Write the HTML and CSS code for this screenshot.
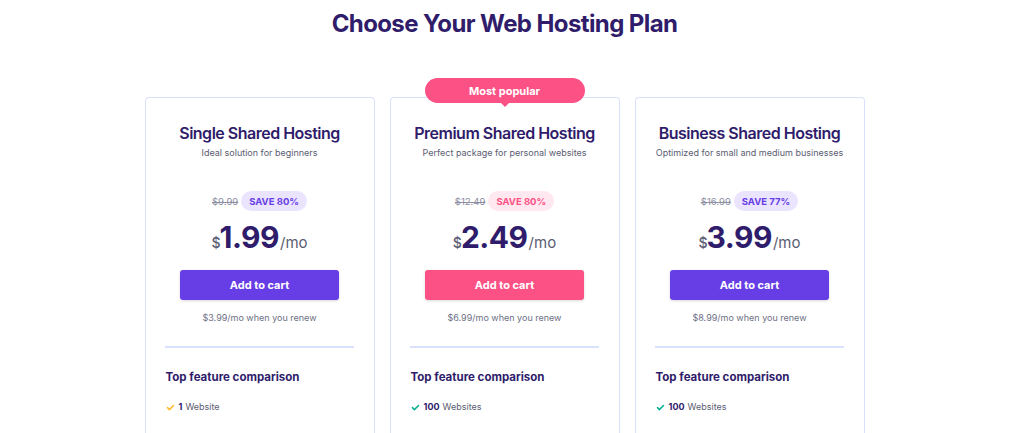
FILE: index.html
```html
<!DOCTYPE html>
<html lang="en">
<head>
<meta charset="utf-8">
<title>Choose Your Web Hosting Plan</title>
<link rel="stylesheet" href="styles.css">
</head>
<body>
<main class="page">
  <h1 class="title">Choose Your Web Hosting Plan</h1>
  <div class="plans">
    <section class="card">
      <h2 class="card-title">Single Shared Hosting</h2>
      <p class="card-sub">Ideal solution for beginners</p>
      <div class="save-row">
        <span class="old">$9.99</span>
        <span class="save">SAVE 80%</span>
      </div>
      <div class="price"><span class="cur">$</span><span class="amt">1.99</span><span class="per">/mo</span></div>
      <button class="cart">Add to cart</button>
      <p class="renew">$3.99/mo when you renew</p>
      <hr class="divider">
      <h3 class="feat-title">Top feature comparison</h3>
      <ul class="feats">
        <li><svg class="check yellow" viewBox="0 0 12 12"><path d="M2 6.2l2.6 2.6L10 3.4"/></svg><b>1</b> Website</li>
      </ul>
    </section>
    <section class="card popular">
      <div class="badge">Most popular</div>
      <h2 class="card-title">Premium Shared Hosting</h2>
      <p class="card-sub">Perfect package for personal websites</p>
      <div class="save-row">
        <span class="old">$12.49</span>
        <span class="save pink">SAVE 80%</span>
      </div>
      <div class="price"><span class="cur">$</span><span class="amt">2.49</span><span class="per">/mo</span></div>
      <button class="cart pink">Add to cart</button>
      <p class="renew">$6.99/mo when you renew</p>
      <hr class="divider">
      <h3 class="feat-title">Top feature comparison</h3>
      <ul class="feats">
        <li><svg class="check green" viewBox="0 0 12 12"><path d="M2 6.2l2.6 2.6L10 3.4"/></svg><b>100</b> Websites</li>
      </ul>
    </section>
    <section class="card">
      <h2 class="card-title">Business Shared Hosting</h2>
      <p class="card-sub">Optimized for small and medium businesses</p>
      <div class="save-row">
        <span class="old">$16.99</span>
        <span class="save">SAVE 77%</span>
      </div>
      <div class="price"><span class="cur">$</span><span class="amt">3.99</span><span class="per">/mo</span></div>
      <button class="cart">Add to cart</button>
      <p class="renew">$8.99/mo when you renew</p>
      <hr class="divider">
      <h3 class="feat-title">Top feature comparison</h3>
      <ul class="feats">
        <li><svg class="check green" viewBox="0 0 12 12"><path d="M2 6.2l2.6 2.6L10 3.4"/></svg><b>100</b> Websites</li>
      </ul>
    </section>
  </div>
</main>
</body>
</html>
```
FILE: styles.css
```css
* { box-sizing: border-box; }
html, body { margin: 0; padding: 0; background: #fff; }
body {
  font-family: "Inter", "DejaVu Sans", sans-serif;
  color: #2f1c6a;
  overflow: hidden;
  height: 433px;
}
.page {
  width: 1009px;
  display: flex;
  flex-direction: column;
  align-items: center;
}
.title {
  margin: 9px 0 0;
  font-size: 24px;
  font-weight: 700;
  letter-spacing: -0.6px;
  line-height: 30px;
  color: #2f1c6a;
}
.plans {
  margin-top: 58px;
  display: flex;
  gap: 15px;
}
.card {
  position: relative;
  width: 230px;
  height: 360px;
  border: 1px solid #dae1fc;
  border-bottom: none;
  border-radius: 4px 4px 0 0;
  display: flex;
  flex-direction: column;
  align-items: center;
  padding-top: 24px;
}
.badge {
  position: absolute;
  top: -20px;
  left: 50%;
  transform: translateX(-50%);
  width: 160px;
  height: 25px;
  border-radius: 13px;
  background: #fc5185;
  color: #fff;
  font-size: 11px;
  font-weight: 700;
  display: flex;
  align-items: center;
  justify-content: center;
}
.badge::after {
  content: "";
  position: absolute;
  left: 50%;
  bottom: -4px;
  margin-left: -4px;
  border-left: 4px solid transparent;
  border-right: 4px solid transparent;
  border-top: 4px solid #fc5185;
}
.card-title {
  margin: 0;
  font-size: 16px;
  font-weight: 600;
  line-height: 22px;
  letter-spacing: -0.5px;
  color: #2f1c6a;
}
.card-sub {
  margin: 3px 0 0;
  font-size: 9px;
  line-height: 12px;
  color: #5b5d72;
}
.save-row {
  margin-top: 32px;
  display: flex;
  align-items: center;
  gap: 3px;
}
.old {
  font-size: 9.5px;
  color: #8c8ea2;
  text-decoration: line-through;
}
.save {
  font-size: 9.5px;
  font-weight: 700;
  color: #673de6;
  background: #ebe4ff;
  border-radius: 10px;
  height: 20px;
  padding: 0 8px;
  display: flex;
  align-items: center;
}
.save.pink { color: #fc5185; background: #ffe8ef; }
.price {
  margin-top: 8px;
  display: flex;
  align-items: baseline;
  height: 36px;
}
.cur { font-size: 14px; color: #5b5d72; font-weight: 500; margin-right: -1px; }
.amt { font-size: 30px; font-weight: 700; letter-spacing: -0.5px; color: #2f1c6a; }
.per { font-size: 15px; color: #5b5d72; margin-left: 1px; }
.cart {
  margin-top: 15px;
  width: 159px;
  height: 30px;
  border: none;
  border-radius: 3px;
  background: #673de6;
  color: #fff;
  font-family: inherit;
  font-size: 11px;
  font-weight: 700;
  box-shadow: 0 1px 3px rgba(0,0,0,0.15);
}
.cart.pink { background: #fc5185; }
.renew {
  margin: 12px 0 0;
  font-size: 9px;
  line-height: 12px;
  color: #6d6f84;
}
.divider {
  margin: 22px 0 0;
  width: 189px;
  border: none;
  height: 2px;
  background: #dae1fc;
}
.feat-title {
  align-self: flex-start;
  margin: 22px 0 0 20px;
  font-size: 11.5px;
  font-weight: 700;
  line-height: 14px;
  color: #2f1c6a;
}
.feats {
  align-self: flex-start;
  list-style: none;
  margin: 17px 0 0 20px;
  padding: 0;
}
.feats li {
  display: flex;
  align-items: center;
  font-size: 9px;
  color: #5b5d72;
  line-height: 12px;
}
.feats b { color: #2f1c6a; font-weight: 700; margin-right: 3px; }
.check {
  width: 9px;
  height: 9px;
  margin-right: 4px;
  fill: none;
  stroke-width: 2;
  stroke-linecap: round;
  stroke-linejoin: round;
}
.check.yellow { stroke: #ffb829; }
.check.green { stroke: #00b090; }
```
